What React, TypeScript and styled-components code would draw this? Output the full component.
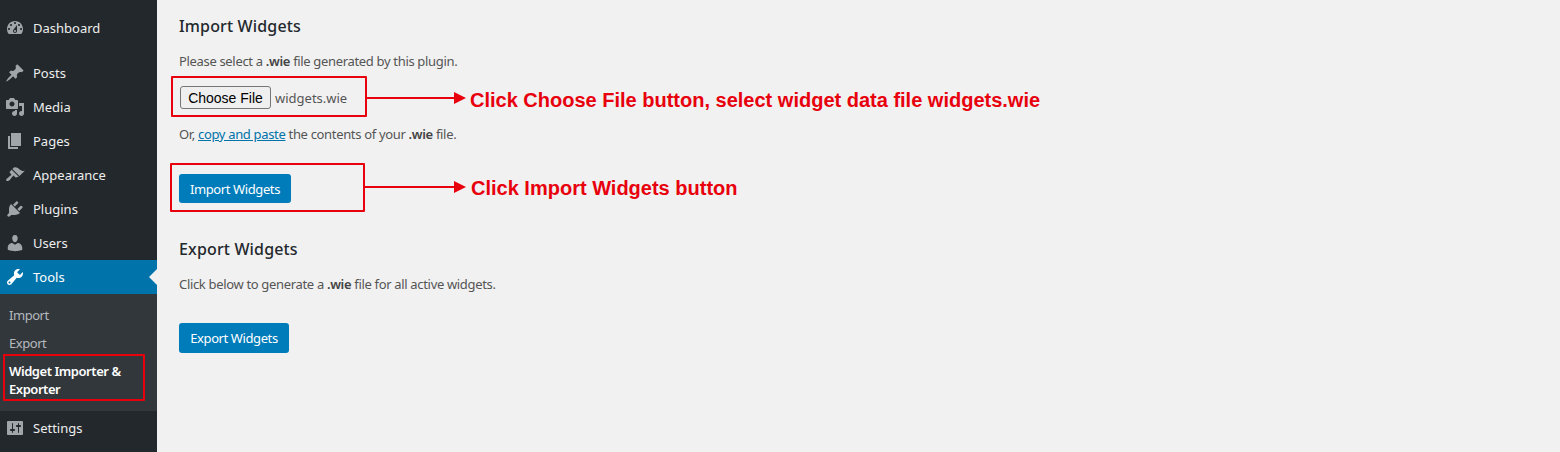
import React from 'react'
import styled, { createGlobalStyle } from 'styled-components'

const GlobalStyle = createGlobalStyle`
  html, body {
    margin: 0;
    height: 100%;
    overflow: hidden;
    background: #f1f1f1;
  }
  body {
    font-family: "Noto Sans", "Open Sans", sans-serif;
    font-size: 13px;
    color: #444;
  }
`

const ICONS: Record<string, string> = {
  dashboard:
    'M3.76 16h12.48c1.1-1.37 1.76-3.11 1.76-5 0-4.42-3.58-8-8-8s-8 3.58-8 8c0 1.89.66 3.63 1.76 5zM10 4c.55 0 1 .45 1 1s-.45 1-1 1-1-.45-1-1 .45-1 1-1zM6 6c.55 0 1 .45 1 1s-.45 1-1 1-1-.45-1-1 .45-1 1-1zm8 0c.55 0 1 .45 1 1s-.45 1-1 1-1-.45-1-1 .45-1 1-1zm-5.37 5.55L12 7v6c0 1.1-.9 2-2 2s-2-.9-2-2c0-.57.24-1.08.63-1.45zM4 10c.55 0 1 .45 1 1s-.45 1-1 1-1-.45-1-1 .45-1 1-1zm12 0c.55 0 1 .45 1 1s-.45 1-1 1-1-.45-1-1 .45-1 1-1zm-5 3c0-.55-.45-1-1-1s-1 .45-1 1 .45 1 1 1 1-.45 1-1z',
  posts:
    'M10.44 3.02l1.82-1.82 6.36 6.35-1.83 1.82c-1.05-.68-2.48-.57-3.41.36l-.75.75c-.92.93-1.04 2.35-.35 3.41l-1.83 1.82-2.41-2.41-2.8 2.79c-.42.42-3.38 2.71-3.8 2.29s1.86-3.39 2.28-3.81l2.79-2.79L4.1 9.36l1.83-1.82c1.05.69 2.48.57 3.4-.36l.75-.75c.93-.92 1.05-2.35.36-3.41z',
  media:
    'M13 11V4c0-.55-.45-1-1-1h-1.67L9 1H5L3.67 3H2c-.55 0-1 .45-1 1v7c0 .55.45 1 1 1h10c.55 0 1-.45 1-1zM7 4.5c1.38 0 2.5 1.12 2.5 2.5S8.38 9.5 7 9.5 4.5 8.38 4.5 7 5.62 4.5 7 4.5zM14 6h5v10.5c0 1.38-1.12 2.5-2.5 2.5S14 17.88 14 16.5s1.12-2.5 2.5-2.5c.17 0 .34.02.5.05V9h-3V6zm-4 8.05V13h2v3.5c0 1.38-1.12 2.5-2.5 2.5S7 17.88 7 16.5 8.12 14 9.5 14c.17 0 .34.02.5.05z',
  pages: 'M6 15V2h10v13H6zm-1 1h8v2H3V5h2v11z',
  appearance:
    'M14.48 11.06L7.41 3.99l1.5-1.5c.5-.56 2.3-.47 3.51.32 1.21.8 1.43 1.28 2.91 2.1 1.18.64 2.45 1.26 4.45.85zm-.71.71L6.7 4.7 4.93 6.47c-.39.39-.39 1.02 0 1.41l1.06 1.06c.39.39.39 1.03 0 1.42-.6.6-1.43 1.11-2.21 1.69-.35.26-.7.53-1.01.84C1.43 13.23.78 15.13 1.4 15.75c.62.62 2.52-.03 3.86-1.37.31-.31.58-.66.84-1.01.58-.78 1.09-1.61 1.69-2.21.39-.39 1.03-.39 1.42 0l1.06 1.06c.39.39 1.02.39 1.41 0z',
  plugins:
    'M13.11 4.36L9.87 7.6 8 5.73l3.24-3.24c.35-.34 1.05-.2 1.56.32.52.51.66 1.21.31 1.55zm-8 1.77l.91-1.12 9.01 9.01-1.19.84c-.71.71-2.63 1.16-3.82 1.16H6.14L4.9 17.26c-.59.59-1.54.59-2.12 0-.59-.58-.59-1.53 0-2.12l1.24-1.24v-3.88c0-1.13.4-3.19 1.09-3.89zm7.26 3.97l3.24-3.24c.34-.35 1.04-.21 1.55.31.52.51.66 1.21.31 1.55l-3.24 3.25z',
  users:
    'M10 9.25c-2.27 0-2.73-3.44-2.73-3.44C7 4.02 7.82 2 9.97 2c2.16 0 2.98 2.02 2.71 3.81 0 0-.41 3.44-2.68 3.44zm0 2.57L12.72 10c2.39 0 4.52 2.33 4.52 4.53v2.49s-3.65 1.13-7.24 1.13c-3.65 0-7.24-1.13-7.24-1.13v-2.49c0-2.25 1.94-4.48 4.47-4.48z',
  tools:
    'M16.68 9.77c-1.34 1.34-3.3 1.67-4.95.99l-5.41 6.52c-.99.99-2.59.99-3.58 0s-.99-2.59 0-3.57l6.52-5.42c-.68-1.65-.35-3.61.99-4.95 1.28-1.28 3.12-1.62 4.72-1.06l-2.89 2.89 2.82 2.82 2.86-2.87c.53 1.58.18 3.39-1.08 4.65zM3.81 16.21c.4.39 1.04.39 1.43 0 .4-.4.4-1.04 0-1.43-.39-.4-1.03-.4-1.43 0-.39.39-.39 1.03 0 1.43z',
  settings:
    'M18 16V4c0-.55-.45-1-1-1H3c-.55 0-1 .45-1 1v12c0 .55.45 1 1 1h14c.55 0 1-.45 1-1zM8 11h1c.55 0 1 .45 1 1s-.45 1-1 1H8v1.5c0 .28-.22.5-.5.5s-.5-.22-.5-.5V13H6c-.55 0-1-.45-1-1s.45-1 1-1h1V5.500c0-.28.22-.5.5-.5s.5.22.5.5V11zm5-2h-1c-.55 0-1-.45-1-1s.45-1 1-1h1V5.500c0-.28.22-.5.5-.5s.5.22.5.5V7h1c.55 0 1 .45 1 1s-.45 1-1 1h-1v5.500c0 .28-.22.5-.5.5s-.5-.22-.5-.5V9z',
}

const Page = styled.div`
  position: relative;
  display: flex;
  width: 1560px;
  height: 452px;
  overflow: hidden;
  background: #f1f1f1;
`

const Sidebar = styled.nav`
  flex: 0 0 157px;
  padding-top: 11px;
  background: #23282d;
`

const MenuItem = styled.div<{ $active?: boolean; $gap?: boolean }>`
  position: relative;
  display: flex;
  align-items: center;
  height: 34px;
  margin-bottom: ${(p) => (p.$gap ? '11px' : '0')};
  background: ${(p) => (p.$active ? '#0073aa' : 'transparent')};
  color: ${(p) => (p.$active ? '#fff' : '#eee')};

  svg {
    flex: 0 0 20px;
    margin: 0 8px 0 5px;
    fill: ${(p) => (p.$active ? '#fff' : '#a0a5aa')};
  }
`

const Notch = styled.span`
  position: absolute;
  right: 0;
  top: 9px;
  border: 8px solid transparent;
  border-left-width: 0;
  border-right-color: #f1f1f1;
`

const SubMenu = styled.div`
  padding: 7px 0 8px;
  background: #32373c;
`

const SubItem = styled.div<{ $current?: boolean }>`
  padding: 5px 12px 5px 9px;
  line-height: 18px;
  color: ${(p) => (p.$current ? '#fff' : '#b4b9be')};
  font-weight: ${(p) => (p.$current ? 600 : 400)};
  letter-spacing: -0.45px;
`

const Main = styled.main`
  flex: 1;
  padding: 15px 0 0 22px;
`

const Heading = styled.h2<{ $top?: number }>`
  margin: ${(p) => p.$top ?? 0}px 0 0;
  font-size: 16px;
  line-height: 23px;
  font-weight: 500;
  letter-spacing: 0.15px;
  color: #23282d;
`

const Text = styled.p<{ $top: number }>`
  margin: ${(p) => p.$top}px 0 0;
  line-height: 18px;
  letter-spacing: -0.33px;
  color: #555;

  strong {
    font-weight: 600;
    color: #444;
  }

  a {
    color: #0073aa;
    text-decoration: underline;
  }
`

const FileRow = styled.div`
  display: flex;
  align-items: center;
  gap: 4px;
  margin: 16px 0 0 1px;
  height: 23px;
  color: #555;
  font-size: 13px;
`

const ChooseButton = styled.button`
  box-sizing: border-box;
  width: 91px;
  height: 23px;
  padding: 0;
  border: 1px solid #767676;
  border-radius: 3px;
  background: #efefef;
  color: #000;
  font-family: "Liberation Sans", Arial, sans-serif;
  font-size: 14px;
`

const PrimaryButton = styled.button<{ $top: number; $width: number; $height: number }>`
  display: block;
  box-sizing: border-box;
  width: ${(p) => p.$width}px;
  height: ${(p) => p.$height}px;
  margin-top: ${(p) => p.$top}px;
  padding: 0;
  border: 0;
  border-radius: 3px;
  background: #007cba;
  color: #fff;
  font-family: inherit;
  font-size: 13px;
  letter-spacing: -0.4px;
`

const RedBox = styled.div<{ $x: number; $y: number; $w: number; $h: number }>`
  position: absolute;
  left: ${(p) => p.$x}px;
  top: ${(p) => p.$y}px;
  width: ${(p) => p.$w}px;
  height: ${(p) => p.$h}px;
  box-sizing: border-box;
  border: 2px solid #e8000d;
  border-radius: 1px;
`

const Arrow = styled.svg<{ $x: number; $y: number }>`
  position: absolute;
  left: ${(p) => p.$x}px;
  top: ${(p) => p.$y}px;
`

const Callout = styled.div<{ $x: number; $y: number }>`
  position: absolute;
  left: ${(p) => p.$x}px;
  top: ${(p) => p.$y}px;
  color: #e8000d;
  font-family: "Liberation Sans", Arial, sans-serif;
  font-size: 20px;
  font-weight: 700;
  line-height: 24px;
  white-space: nowrap;
`

const Icon = ({ name }: { name: string }) => (
  <svg width="20" height="20" viewBox="0 0 20 20">
    <path d={ICONS[name]} />
  </svg>
)

const MENU_TOP = [
  { icon: 'posts', label: 'Posts' },
  { icon: 'media', label: 'Media' },
  { icon: 'pages', label: 'Pages' },
  { icon: 'appearance', label: 'Appearance' },
  { icon: 'plugins', label: 'Plugins' },
  { icon: 'users', label: 'Users' },
]

const RedArrow = ({ x, y, width }: { x: number; y: number; width: number }) => (
  <Arrow $x={x} $y={y} width={width} height="14" viewBox={`0 0 ${width} 14`}>
    <rect x="0" y="6" width={width - 10} height="2" fill="#e8000d" />
    <polygon points={`${width - 12},1 ${width},7 ${width - 12},13`} fill="#e8000d" />
  </Arrow>
)

export default function App() {
  return (
    <Page>
      <GlobalStyle />
      <Sidebar>
        <MenuItem $gap>
          <Icon name="dashboard" />
          Dashboard
        </MenuItem>
        {MENU_TOP.map((item) => (
          <MenuItem key={item.label}>
            <Icon name={item.icon} />
            {item.label}
          </MenuItem>
        ))}
        <MenuItem $active>
          <Icon name="tools" />
          Tools
          <Notch />
        </MenuItem>
        <SubMenu>
          <SubItem>Import</SubItem>
          <SubItem>Export</SubItem>
          <SubItem $current>Widget Importer &amp; Exporter</SubItem>
        </SubMenu>
        <MenuItem>
          <Icon name="settings" />
          Settings
        </MenuItem>
      </Sidebar>
      <Main>
        <Heading>Import Widgets</Heading>
        <Text $top={14}>
          Please select a <strong>.wie</strong> file generated by this plugin.
        </Text>
        <FileRow>
          <ChooseButton>Choose File</ChooseButton>
          widgets.wie
        </FileRow>
        <Text $top={16}>
          Or, <a href="#paste">copy and paste</a> the contents of your <strong>.wie</strong> file.
        </Text>
        <PrimaryButton $top={31} $width={112} $height={29}>Import Widgets</PrimaryButton>
        <Heading $top={35}>Export Widgets</Heading>
        <Text $top={14}>
          Click below to generate a <strong>.wie</strong> file for all active widgets.
        </Text>
        <PrimaryButton $top={30} $width={110} $height={30}>Export Widgets</PrimaryButton>
      </Main>

      <RedBox $x={3} $y={354} $w={142} $h={47} />
      <RedBox $x={171} $y={76} $w={196} $h={41} />
      <RedBox $x={170} $y={163} $w={195} $h={49} />
      <RedArrow x={366} y={91} width={100} />
      <RedArrow x={364} y={180} width={102} />
      <Callout $x={470} $y={88}>Click Choose File button, select widget data file widgets.wie</Callout>
      <Callout $x={471} $y={176}>Click Import Widgets button</Callout>
    </Page>
  )
}
